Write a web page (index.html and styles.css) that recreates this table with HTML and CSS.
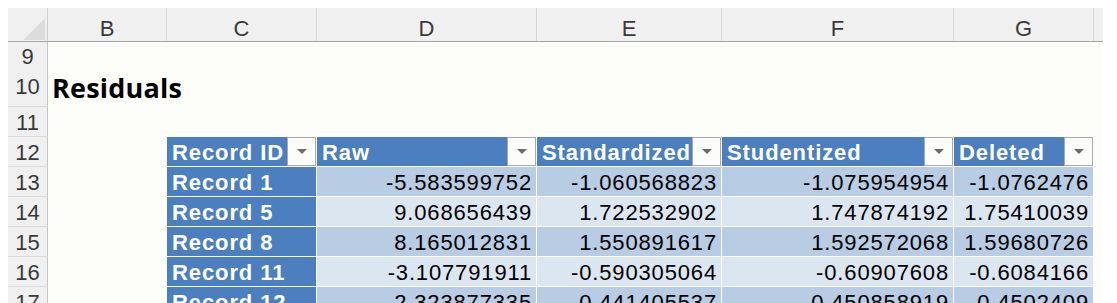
FILE: index.html
```html
<!DOCTYPE html>
<html lang="en">
<head>
  <meta charset="UTF-8" />
  <title>Residuals</title>
  <link rel="stylesheet" href="styles.css">
</head>
<body>
  <div class="sheet">

    <!-- column letters -->
    <div class="row heads">
      <div class="corner">
        <svg width="40" height="34" viewBox="0 0 40 34"><polygon points="15,32 37,32 37,10" fill="#dcdcdc"/></svg>
      </div>
      <div class="col">B</div>
      <div class="col">C</div>
      <div class="col">D</div>
      <div class="col">E</div>
      <div class="col">F</div>
      <div class="col">G</div>
      <div class="col last"></div>
    </div>

    <div class="row r24">
      <div class="num">9</div>
    </div>

    <div class="row r41">
      <div class="num">10</div>
      <div class="title">Residuals</div>
    </div>

    <div class="row r30">
      <div class="num">11</div>
    </div>

    <div class="row r30">
      <div class="num">12</div>
      <div></div>
      <div class="th">Record ID<span class="filter"></span></div>
      <div class="th">Raw<span class="filter"></span></div>
      <div class="th">Standardized<span class="filter"></span></div>
      <div class="th">Studentized<span class="filter"></span></div>
      <div class="th">Deleted<span class="filter"></span></div>
    </div>

    <div class="row r30 band1">
      <div class="num">13</div>
      <div></div>
      <div class="rec">Record 1</div>
      <div class="val">-5.583599752</div>
      <div class="val">-1.060568823</div>
      <div class="val">-1.075954954</div>
      <div class="val">-1.0762476</div>
    </div>

    <div class="row r30 band2">
      <div class="num">14</div>
      <div></div>
      <div class="rec">Record 5</div>
      <div class="val">9.068656439</div>
      <div class="val">1.722532902</div>
      <div class="val">1.747874192</div>
      <div class="val">1.75410039</div>
    </div>

    <div class="row r30 band1">
      <div class="num">15</div>
      <div></div>
      <div class="rec">Record 8</div>
      <div class="val">8.165012831</div>
      <div class="val">1.550891617</div>
      <div class="val">1.592572068</div>
      <div class="val">1.59680726</div>
    </div>

    <div class="row r30 band2">
      <div class="num">16</div>
      <div></div>
      <div class="rec">Record 11</div>
      <div class="val">-3.107791911</div>
      <div class="val">-0.590305064</div>
      <div class="val">-0.60907608</div>
      <div class="val">-0.6084166</div>
    </div>

    <div class="row r30 band1">
      <div class="num">17</div>
      <div></div>
      <div class="rec">Record 12</div>
      <div class="val">-2.323877335</div>
      <div class="val">-0.441405537</div>
      <div class="val">-0.450858919</div>
      <div class="val">-0.4502409</div>
    </div>

  </div>
</body>
</html>
```

FILE: styles.css
```css
html, body {
  overflow: hidden;
}

body {
  margin: 0;
  background: #fff;
  font-family: "Liberation Sans", Arial, sans-serif;
  font-size: 22px;
  color: #000;
}

.sheet {
  margin: 8px 0 0 8px;
  width: 1095px;
  background: #fdfdfa;
  display: flex;
  flex-direction: column;
}

.row {
  display: grid;
  grid-template-columns: 40px 119px 150px 220px 185px 232px 140px 9px;
  box-sizing: border-box;
}

.r24 { height: 24px; }
.r30 { height: 30px; }
.r41 { height: 41px; }

/* column letters */
.heads {
  height: 34px;
  background: #f0f0f0;
  border-bottom: 1px solid #a3a3a3;
}

.corner {
  border-right: 1px solid #cfcfcf;
  height: 33px;
  overflow: hidden;
}
.corner svg { display: block; }

.col {
  text-align: center;
  color: #3a3a3a;
  line-height: 25px;
  padding-top: 8px;
  border-right: 1px solid #d8d8d8;
  box-sizing: border-box;
}
.col.last { border-right: none; }

/* row numbers */
.num {
  background: #f0f0f0;
  color: #3a3a3a;
  border-right: 1px solid #c6c6c6;
  border-bottom: 1px solid #dcdcdc;
  box-sizing: border-box;
  display: flex;
  align-items: center;
  justify-content: center;
  padding-top: 2px;
}

.title {
  font-family: "Open Sans", "Liberation Sans", sans-serif;
  font-weight: 700;
  font-size: 27px;
  letter-spacing: 0.2px;
  white-space: nowrap;
  align-self: end;
  padding: 0 0 1px 4px;
  line-height: 36px;
}

/* table */
.th, .rec, .val {
  box-sizing: border-box;
  border-right: 1px solid #fff;
  border-bottom: 1px solid #fff;
  padding: 2px 5px 0 5px;
  line-height: 28px;
  letter-spacing: 0.9px;
  white-space: nowrap;
  overflow: hidden;
}

.th {
  position: relative;
  background: #4b7fc0;
  color: #fff;
  font-weight: 700;
}

.rec {
  background: #4b7fc0;
  color: #fff;
  font-weight: 700;
}

.val {
  text-align: right;
  padding-right: 4px;
  letter-spacing: 0.85px;
}

.band1 .val { background: #b8cce4; }
.band2 .val { background: #dce6f1; }

.filter {
  position: absolute;
  top: 0;
  right: 0;
  width: 29px;
  height: 29px;
  box-sizing: border-box;
  border: 1px solid #a9a9a9;
  background: #fcfcfa;
  display: flex;
  align-items: center;
  justify-content: center;
}
.filter::after {
  content: "";
  border-left: 5.5px solid transparent;
  border-right: 5.5px solid transparent;
  border-top: 5px solid #6b6b6b;
}
```
